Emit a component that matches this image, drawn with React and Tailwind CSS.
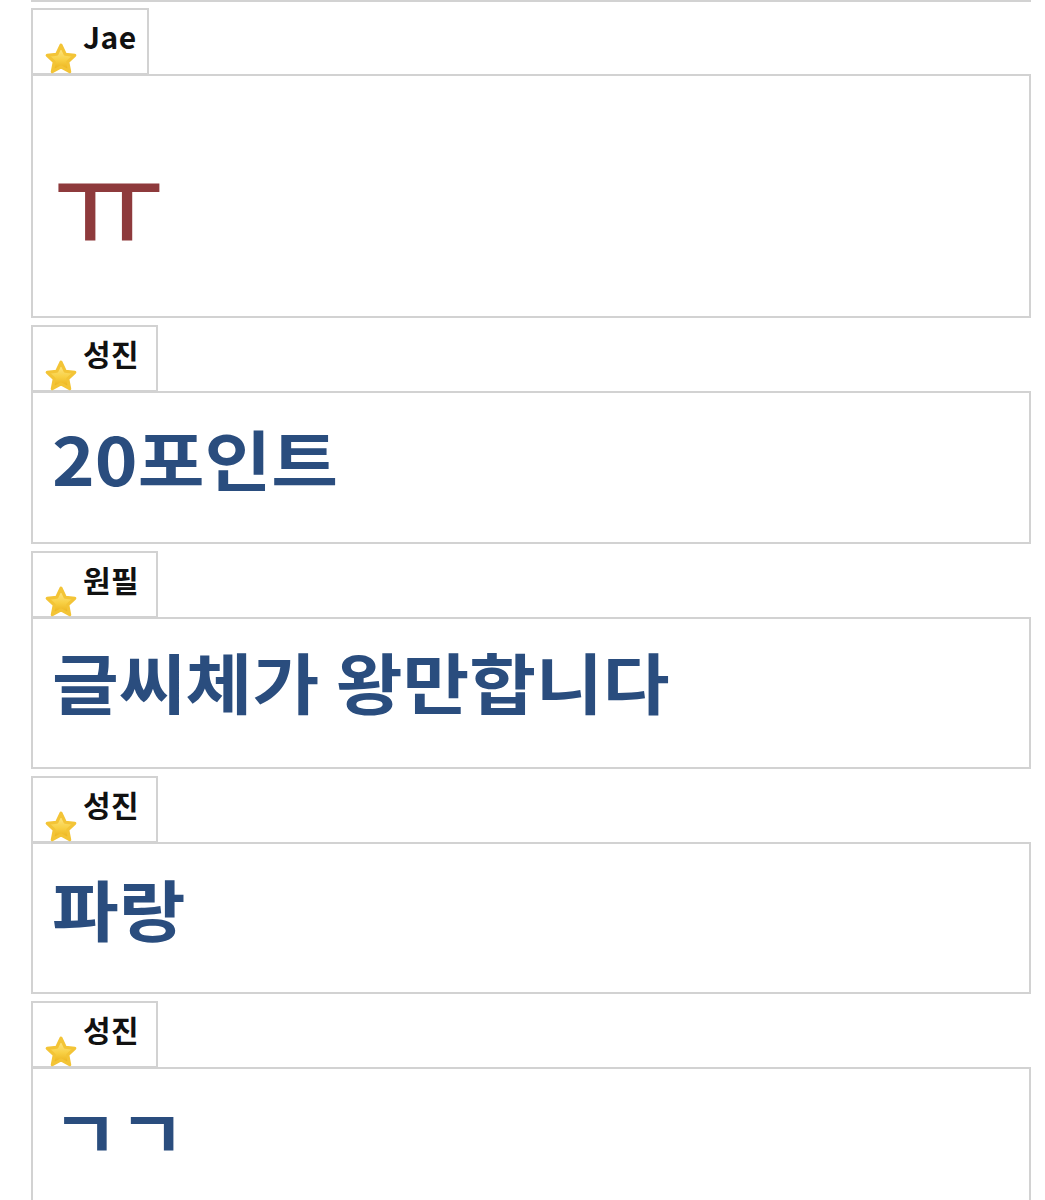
const names = "font-['Noto_Sans_CJK_KR','Noto_Sans',sans-serif]";

function Star() {
  return (
    <svg width="36" height="34" viewBox="0 0 34 32" className="absolute left-[10px] bottom-[-3px]">
      <defs>
        <linearGradient id="starFill" x1="0" y1="0" x2="0" y2="1">
          <stop offset="0" stopColor="#ffeb94" />
          <stop offset="0.55" stopColor="#f8d044" />
          <stop offset="1" stopColor="#e8ab14" />
        </linearGradient>
      </defs>
      <path
        d="M17 3 L21 11.5 L30 12.6 L23.4 18.8 L25.2 28 L17 23.4 L8.8 28 L10.6 18.8 L4 12.6 L13 11.5 Z"
        fill="url(#starFill)"
        stroke="#f3c436"
        strokeWidth="3"
        strokeLinejoin="round"
      />
    </svg>
  );
}

function Entry({ name, tabWidth, boxHeight, text, children, align = "items-center" }) {
  return (
    <div className="flex flex-col">
      <div
        className={`relative h-[68px] border-2 border-b-[3px] border-[#d2d2d2] bg-white ${tabWidth} -mb-[2px] z-10`}
      >
        <Star />
        <span
          className={`absolute left-[50px] top-[11px] text-[30px] tracking-[0.5px] font-bold leading-none text-[#111] ${names}`}
        >
          {name}
        </span>
      </div>
      <div className={`flex ${align} border-2 border-[#d2d2d2] bg-white pl-[19px] ${boxHeight}`}>
        <span className={`leading-none origin-left ${text} ${names}`}>{children}</span>
      </div>
    </div>
  );
}

// wide, slightly squat lettering for the blue comments
const blue = "font-bold text-[#2a4d7e] text-[66px] scale-x-[1.1]";

export default function App() {
  return (
    <div className="min-h-[1200px] bg-white pl-[31px] pr-[14px]">
      <div className="h-[2px] border-b-2 border-[#d2d2d2]" />
      <div className="flex flex-col gap-[7px] pt-[6px]">
        <Entry
          name="Jae"
          tabWidth="w-[118px]"
          boxHeight="h-[244px]"
          text="font-normal text-[#8e3a3c] text-[124px]"
          align="items-center pb-[4px]"
        >
          ㅠ
        </Entry>
        <Entry name="성진" tabWidth="w-[127px]" boxHeight="h-[153px]" text={blue} align="items-center pb-[22px]">
          20포인트
        </Entry>
        <Entry name="원필" tabWidth="w-[127px]" boxHeight="h-[152px]" text={blue} align="items-center pb-[26px]">
          글씨체가 왕만합니다
        </Entry>
        <Entry name="성진" tabWidth="w-[127px]" boxHeight="h-[152px]" text={blue} align="items-center pb-[22px]">
          파랑
        </Entry>
        <Entry name="성진" tabWidth="w-[127px]" boxHeight="h-[140px]" text={blue} align="items-start pt-[28px]">
          ㄱㄱ
        </Entry>
      </div>
    </div>
  );
}
